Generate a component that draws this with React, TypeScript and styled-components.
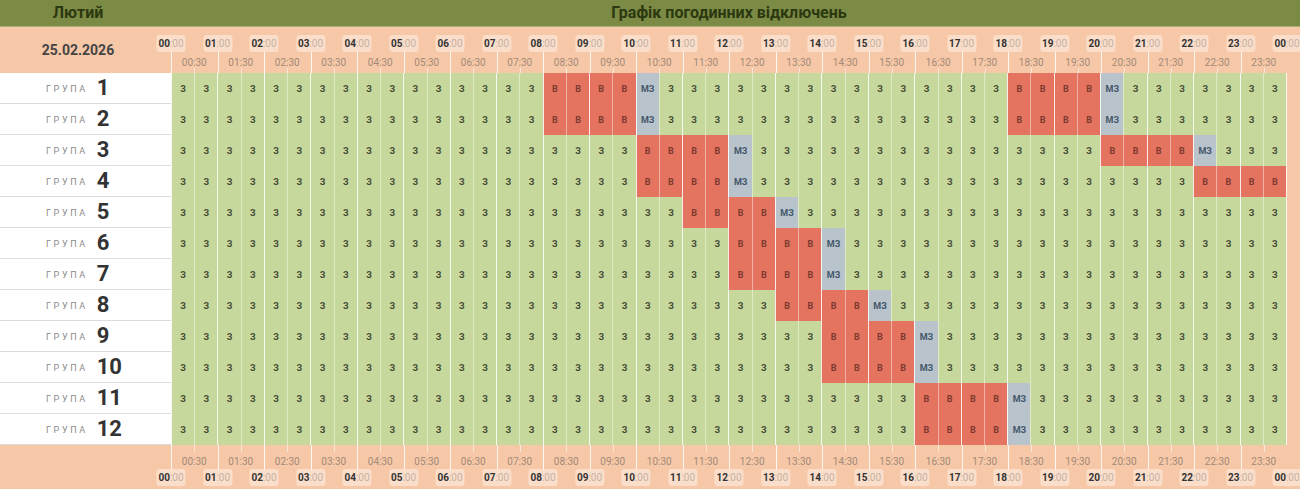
import React from "react";
import styled, { createGlobalStyle, css } from "styled-components";

const GlobalStyle = createGlobalStyle`
  html, body { margin: 0; padding: 0; background: #f6c8a7; }
  body { font-family: Roboto, "Liberation Sans", Arial, sans-serif; }
`;

const COLS = css`
  display: grid;
  grid-template-columns: 171px 1116px 13px;
`;

const Page = styled.div`
  width: 1300px;
  height: 489px;
  background: #f6c8a7;
  overflow: hidden;
`;

const TitleBar = styled.div`
  ${COLS};
  height: 27px;
  background: #7b8a44;
  border-bottom: 1px solid #a9b07a;
  box-sizing: border-box;
  align-items: center;
`;

const TitleText = styled.div<{ $side?: boolean }>`
  text-align: center;
  font-size: 16px;
  font-weight: 700;
  color: #2c3810;
  line-height: 26px;
  padding-right: ${(p) => (p.$side ? "15px" : "0")};
`;

const ScaleRow = styled.div<{ $bottom?: boolean }>`
  ${COLS};
  height: ${(p) => (p.$bottom ? 44 : 46)}px;
`;

const DateCell = styled.div`
  display: flex;
  align-items: center;
  justify-content: center;
  padding-right: 15px;
  font-size: 14px;
  font-weight: 700;
  color: #454545;
`;

const Scale = styled.div`
  display: grid;
  grid-template-columns: repeat(24, 1fr);
`;

const HourCol = styled.div<{ $bottom?: boolean }>`
  position: relative;
  display: grid;
  grid-template-rows: ${(p) => (p.$bottom ? "24px 20px" : "25px 21px")};

  &::before {
    content: "";
    position: absolute;
    left: 0;
    width: 1px;
    background: rgba(255, 255, 255, 0.85);
    ${(p) => (p.$bottom ? "top: 0; height: 25px;" : "top: 24px; bottom: 0;")}
  }
  &::after {
    content: "";
    position: absolute;
    left: 50%;
    width: 1px;
    background: rgba(255, 255, 255, 0.55);
    ${(p) => (p.$bottom ? "top: 0; height: 7px;" : "bottom: 0; height: 5px;")}
  }
`;

const HourLabel = styled.div<{ $end?: boolean; $bottom?: boolean }>`
  grid-area: ${(p) => (p.$bottom ? "2 / 1" : "1 / 1")};
  justify-self: ${(p) => (p.$end ? "end" : "start")};
  align-self: ${(p) => (p.$bottom ? "start" : "end")};
  transform: translateX(${(p) => (p.$end ? "50%" : "-50%")});
  background: rgba(255, 240, 232, 0.55);
  border-radius: 3px;
  padding: 2px 2px;
  font-size: 10px;
  line-height: 13px;
  white-space: nowrap;
  position: relative;
  z-index: 1;
`;

const HourStrong = styled.span`
  font-weight: 700;
  color: #333;
`;

const HourMinor = styled.span`
  color: #c2b2a6;
`;

const HalfLabel = styled.div<{ $bottom?: boolean }>`
  grid-area: ${(p) => (p.$bottom ? "1 / 1" : "2 / 1")};
  justify-self: center;
  align-self: ${(p) => (p.$bottom ? "end" : "start")};
  font-size: 10px;
  line-height: 13px;
  color: #a38a79;
  margin-top: ${(p) => (p.$bottom ? "0" : "4px")};
  margin-bottom: ${(p) => (p.$bottom ? "1px" : "0")};
`;

const GroupRow = styled.div`
  ${COLS};
  height: 31px;
`;

const GroupLabel = styled.div`
  background: #fff;
  border-bottom: 1px solid #dcdcdc;
  box-sizing: border-box;
  display: flex;
  align-items: center;
  padding-left: 46px;
`;

const GroupWord = styled.span`
  font-size: 9px;
  letter-spacing: 2.6px;
  color: #8a8a8a;
  margin-right: 9px;
  margin-top: 1px;
`;

const GroupNum = styled.span`
  font-size: 22px;
  font-weight: 700;
  color: #333;
  line-height: 1;
`;

const Cells = styled.div`
  display: grid;
  grid-template-columns: repeat(48, 1fr);
  border-right: 1px solid rgba(255, 255, 255, 0.85);
`;

type State = "on" | "off" | "maybe";

const palette: Record<State, { bg: string; fg: string }> = {
  on: { bg: "#c6d89b", fg: "#464c36" },
  off: { bg: "#e4735f", fg: "#7c3a2f" },
  maybe: { bg: "#b8c3cc", fg: "#44576a" },
};

const Cell = styled.div<{ $state: State; $hour: boolean }>`
  box-sizing: border-box;
  background: ${(p) => palette[p.$state].bg};
  color: ${(p) => palette[p.$state].fg};
  border-left: 1px solid
    ${(p) => (p.$hour ? "rgba(255,255,255,0.85)" : "rgba(255,255,255,0.45)")};
  display: flex;
  align-items: center;
  justify-content: center;
  font-size: 9px;
  font-weight: 700;
`;

const Spacer = styled.div``;

const blocks: number[][] = [
  [16, 36],
  [16, 36],
  [20, 40],
  [20, 44],
  [22],
  [24],
  [24],
  [26],
  [28],
  [28],
  [32],
  [32],
];

function buildRow(starts: number[]): State[] {
  const row: State[] = Array(48).fill("on");
  starts.forEach((s) => {
    for (let i = s; i < s + 4 && i < 48; i++) row[i] = "off";
    if (s + 4 < 48) row[s + 4] = "maybe";
  });
  return row;
}

const labelText: Record<State, string> = { on: "З", off: "В", maybe: "МЗ" };

const pad = (n: number) => String(n).padStart(2, "0");

function TimeScale({ bottom }: { bottom?: boolean }) {
  return (
    <Scale>
      {Array.from({ length: 24 }, (_, h) => (
        <HourCol key={h} $bottom={bottom}>
          <HourLabel $bottom={bottom}>
            <HourStrong>{pad(h)}</HourStrong>
            <HourMinor>:00</HourMinor>
          </HourLabel>
          {h === 23 && (
            <HourLabel $bottom={bottom} $end>
              <HourStrong>00</HourStrong>
              <HourMinor>:00</HourMinor>
            </HourLabel>
          )}
          <HalfLabel $bottom={bottom}>{pad(h)}:30</HalfLabel>
        </HourCol>
      ))}
    </Scale>
  );
}

export default function App() {
  return (
    <Page>
      <GlobalStyle />
      <TitleBar>
        <TitleText $side>Лютий</TitleText>
        <TitleText>Графік погодинних відключень</TitleText>
        <Spacer />
      </TitleBar>
      <ScaleRow>
        <DateCell>25.02.2026</DateCell>
        <TimeScale />
        <Spacer />
      </ScaleRow>
      {blocks.map((b, gi) => {
        const row = buildRow(b);
        return (
          <GroupRow key={gi}>
            <GroupLabel>
              <GroupWord>ГРУПА</GroupWord>
              <GroupNum>{gi + 1}</GroupNum>
            </GroupLabel>
            <Cells>
              {row.map((s, i) => (
                <Cell key={i} $state={s} $hour={i % 2 === 0}>
                  {labelText[s]}
                </Cell>
              ))}
            </Cells>
            <Spacer />
          </GroupRow>
        );
      })}
      <ScaleRow $bottom>
        <Spacer />
        <TimeScale bottom />
        <Spacer />
      </ScaleRow>
    </Page>
  );
}
